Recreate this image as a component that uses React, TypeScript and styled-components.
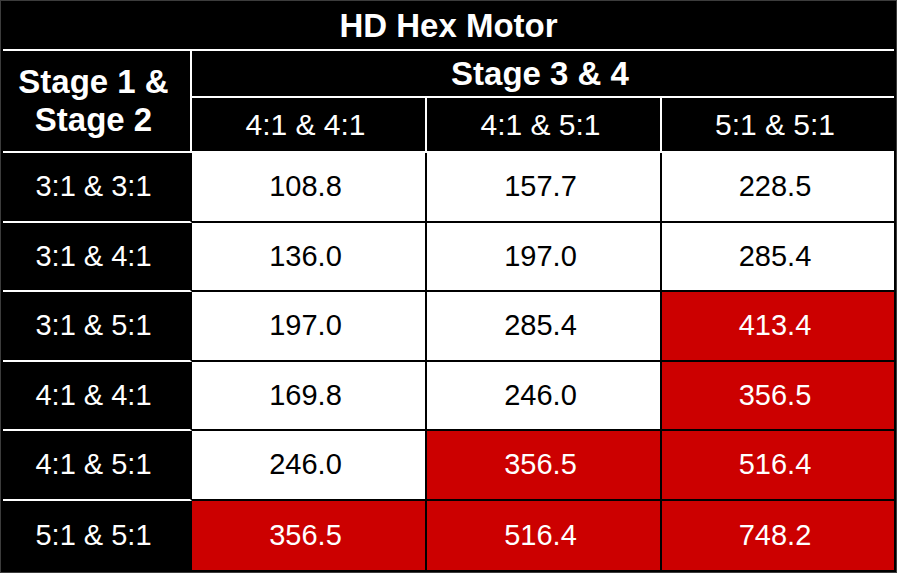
import React from 'react';
import styled, { createGlobalStyle } from 'styled-components';

type Tone = 'plain' | 'hot';

const columns = ['4:1 & 4:1', '4:1 & 5:1', '5:1 & 5:1'];

const rows: { label: string; values: [string, Tone][] }[] = [
    { label: '3:1 & 3:1', values: [['108.8', 'plain'], ['157.7', 'plain'], ['228.5', 'plain']] },
    { label: '3:1 & 4:1', values: [['136.0', 'plain'], ['197.0', 'plain'], ['285.4', 'plain']] },
    { label: '3:1 & 5:1', values: [['197.0', 'plain'], ['285.4', 'plain'], ['413.4', 'hot']] },
    { label: '4:1 & 4:1', values: [['169.8', 'plain'], ['246.0', 'plain'], ['356.5', 'hot']] },
    { label: '4:1 & 5:1', values: [['246.0', 'plain'], ['356.5', 'hot'], ['516.4', 'hot']] },
    { label: '5:1 & 5:1', values: [['356.5', 'hot'], ['516.4', 'hot'], ['748.2', 'hot']] },
];

const GlobalStyle = createGlobalStyle`
    html, body {
        margin: 0;
        padding: 0;
        background: #ffffff;
    }
    body {
        font-family: 'Liberation Sans', Arial, sans-serif;
    }
`;

export default function App() {
    return (
        <>
            <GlobalStyle />
            <Frame>
                <Grid>
                    <Title>HD Hex Motor</Title>
                    <CornerHead>
                        Stage 1 &amp;
                        <br />
                        Stage 2
                    </CornerHead>
                    <GroupHead>Stage 3 &amp; 4</GroupHead>
                    {columns.map((c, i) => (
                        <ColHead key={c} $last={i === columns.length - 1}>
                            {c}
                        </ColHead>
                    ))}
                    {rows.map((row, r) => {
                        const lastRow = r === rows.length - 1;
                        return (
                            <React.Fragment key={row.label}>
                                <RowHead $lastRow={lastRow}>{row.label}</RowHead>
                                {row.values.map(([v, tone], c) => (
                                    <ValueCell
                                        key={c}
                                        $tone={tone}
                                        $lastRow={lastRow}
                                        $lastCol={c === row.values.length - 1}
                                    >
                                        {v}
                                    </ValueCell>
                                ))}
                            </React.Fragment>
                        );
                    })}
                </Grid>
            </Frame>
        </>
    );
}

const Frame = styled.div`
    width: 897px;
    height: 573px;
    box-sizing: border-box;
    border: 1px solid #3c3c3c;
    padding: 2px;
    background: #000000;
`;

const Grid = styled.div`
    display: grid;
    height: 100%;
    grid-template-columns: 189px 235px 235px 1fr;
    grid-template-rows: 48px 47px 55px repeat(6, 1fr);
    color: #ffffff;
`;

const Cell = styled.div`
    box-sizing: border-box;
    display: flex;
    align-items: center;
    justify-content: center;
    text-align: center;
    padding-right: 6px;
    font-size: 29px;
`;

const Title = styled(Cell)`
    grid-column: 1 / -1;
    padding-right: 0;
    font-weight: bold;
    font-size: 33px;
    border-bottom: 2px solid #ffffff;
`;

const CornerHead = styled(Cell)`
    grid-row: 2 / 4;
    font-weight: bold;
    font-size: 33px;
    line-height: 38px;
    border-right: 2px solid #ffffff;
    border-bottom: 2px solid #ffffff;
`;

const GroupHead = styled(Cell)`
    grid-column: 2 / -1;
    font-weight: bold;
    font-size: 33px;
    border-bottom: 2px solid #ffffff;
`;

const ColHead = styled(Cell)<{ $last: boolean }>`
    font-size: 30px;
    border-right: ${(p) => (p.$last ? 'none' : '2px solid #ffffff')};
    border-bottom: 2px solid #ffffff;
`;

const RowHead = styled(Cell)<{ $lastRow: boolean }>`
    border-right: 2px solid #000000;
    border-bottom: ${(p) => (p.$lastRow ? 'none' : '2px solid #ffffff')};
`;

const ValueCell = styled(Cell)<{ $tone: Tone; $lastRow: boolean; $lastCol: boolean }>`
    background: ${(p) => (p.$tone === 'hot' ? '#cc0000' : '#ffffff')};
    color: ${(p) => (p.$tone === 'hot' ? '#ffffff' : '#000000')};
    border-right: ${(p) => (p.$lastCol ? 'none' : '2px solid #000000')};
    border-bottom: ${(p) => (p.$lastRow ? 'none' : '2px solid #000000')};
`;
